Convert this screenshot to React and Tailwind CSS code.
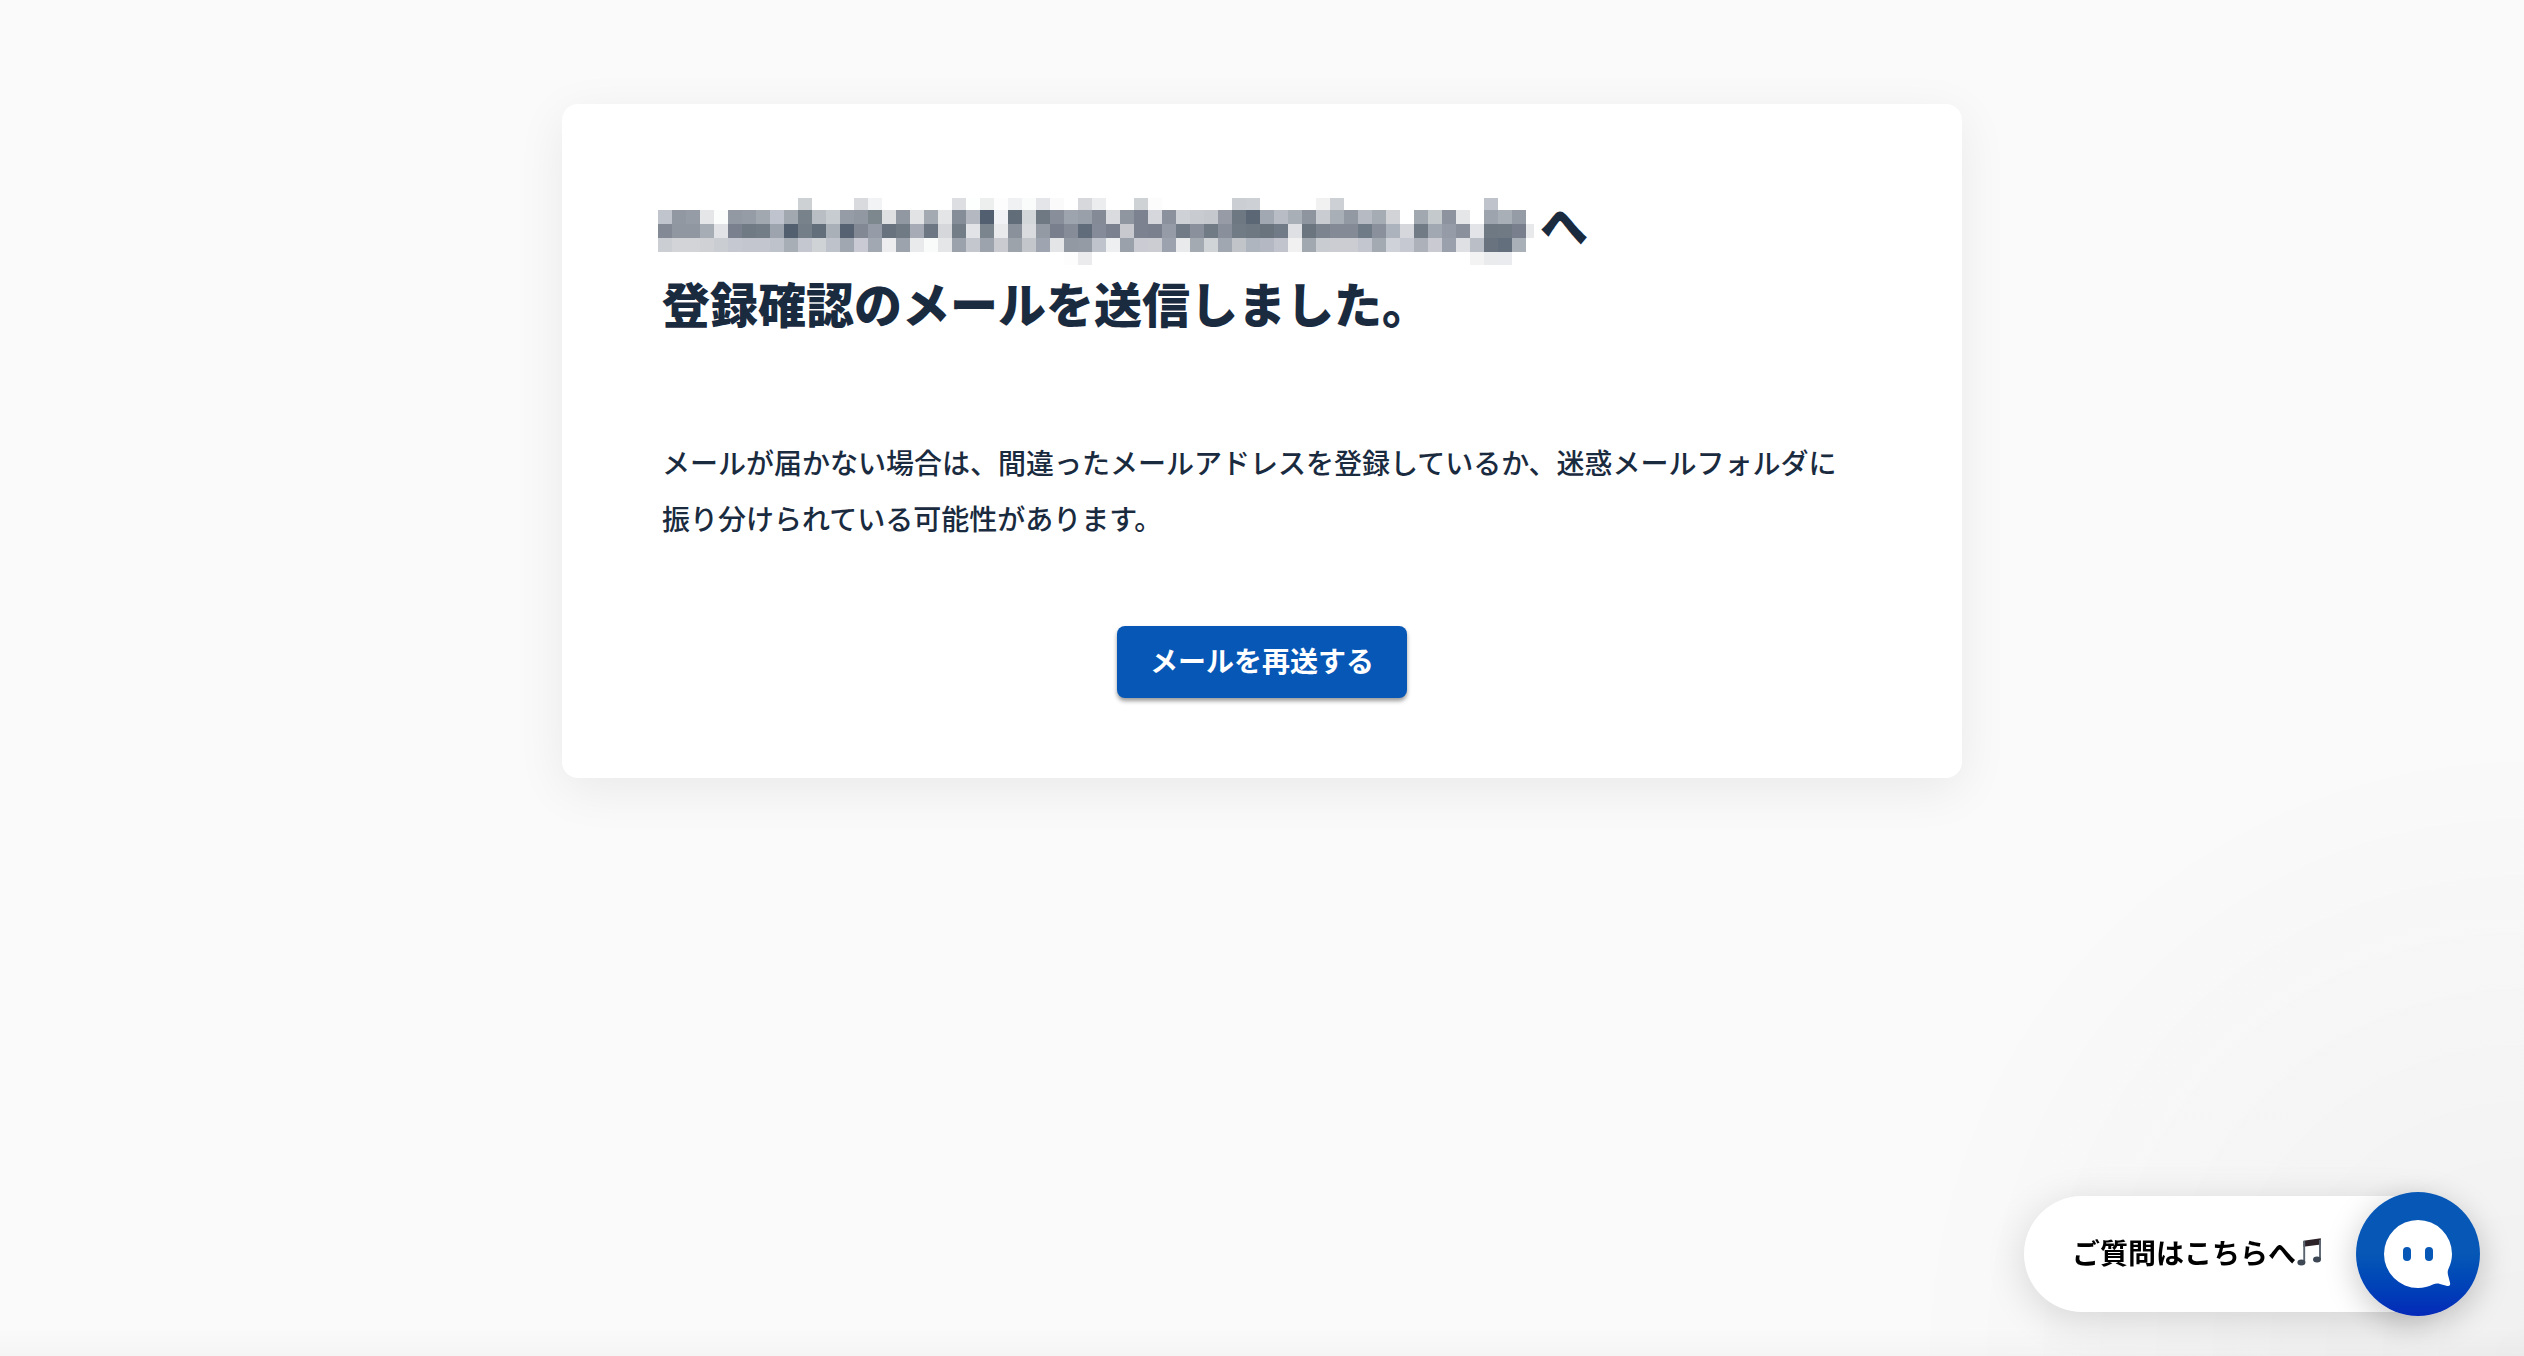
import { useState } from 'react';

const BLOCK = 14;

// Mosaic that hides the mail address, one row of colours per line ('' is empty)
const mosaicRows = [
  {
    y: 0,
    height: 12,
    colors: ',,,,,,,,,,cdd1d4,,,,d9dade,f2f3f5,,,,,,dddee2,fdffff,edefef,fdfdfd,f0f1f2,fafcfb,e4e5e9,fafafb,,d7d8dc,ecedee,,,ced2d5,fcfcfc,,,,,,cbced2,cdd0d5,,,,,f1f1f2,cdd1d5,,,,,,,,,,,bfc4cc',
  },
  {
    y: 12,
    height: 14,
    colors: 'c0c4cd,9198a1,969ca6,e5e6e7,fbfdfc,9299a2,969ca5,a2a8af,bfc3cd,a2a8af,77828a,b9bec5,c7ccd0,969ca6,9298a1,7d878e,dfe0e1,9198a1,e2e3e5,a3aab1,e4e5e7,858d98,b4b8c1,525f70,f1f2f5,616d79,d3d7da,6e7983,898f9a,9ea4ae,9aa0a9,858b96,dadbdf,9096a0,7c8290,d6d7dc,8c929d,ced1d5,c8cbd0,c5c9cd,969ba5,6e7882,5b6775,a2a8b1,b8bdc5,a9afb6,8f959f,c9ccd1,a9afb7,9299a3,b5bac3,a6acb4,d1d3d7,,a2a8b0,c4c9cc,8e949f,e5e6e8,,9da4ae,a8afb7,969ca6',
  },
  {
    y: 26,
    height: 14,
    colors: '838a96,9197a1,9197a1,a6adb4,e1e2e6,7a808e,6f7a85,727d87,9da4ad,525f6f,737e88,626e7a,a9b0b8,566272,828894,959ba7,67727e,6f7a85,a6abb5,6c7783,d6d7db,727d88,e2e3e6,7a858d,e9eaec,8a919b,dadbdf,949aa4,7a7f8e,868d98,606c7a,858b98,7c8190,c7c9cf,7c828f,7b808f,969ca7,707b87,8a909c,707b86,8a909b,707b86,6e7883,69747f,717b87,dfe0e3,6a7580,7c858f,848a96,848a96,707b88,8a919c,adb3bc,d6d7dc,707b86,a2a8b1,969ca7,8a909c,e3e4e7,6e7984,707a85,7a7f8d,e8e9eb',
  },
  {
    y: 40,
    height: 14,
    colors: 'cbced2,d3d4d8,d3d4d8,cfd1d5,cacdd1,c6c8d1,c4c6cf,c4c6cf,bec3cb,a8aeb6,c5c7d0,d0d3d6,bdc2cb,a1a7b1,c9cad4,a1a8b1,ededef,9da3ad,e9eaec,f9fafa,e5e6e8,9ba2ab,c4c7cd,9da3ac,cacbd1,9da3ab,c3c7cb,9fa5b0,e4e5e7,9299a3,959ba5,bfc3cc,eeeff1,9aa1ab,cbccd3,cbcdd2,9da3ae,e9eaec,a3aab2,d1d4d7,a1a7b1,c1c5c9,aeb5be,b4b8c2,c1c4cd,f1f1f1,a1a8af,c9ccd1,cbcdd2,cbcdd2,c3c5cf,a3aab2,d0d2d9,c6c8d2,adb1b9,cacbd2,9aa1ad,dfe0e3,b9bec7,69737f,636f7c,aab0b8',
  },
  {
    y: 54,
    height: 13,
    colors: ',,,,,,,,,,,,,,,,,,,,,,,,,,,,,fdfdfd,ebebed,,,,,,,,,,,,,,,,,,,,,,,,,,,,f3f3f3,eaebed,eaebee',
  },
];

function MaskedAddress() {
  return (
    <svg width="876" height="67" viewBox="0 0 876 67" shapeRendering="crispEdges" className="-ml-1 mr-1.5 -mb-0.5 self-end shrink-0" aria-hidden="true">
      {mosaicRows.map(row =>
        row.colors.split(',').map((color, i) =>
          color ? (
            <rect key={`${row.y}-${i}`} x={i * BLOCK} y={row.y} width={BLOCK} height={row.height} fill={`#${color}`} />
          ) : null
        )
      )}
    </svg>
  );
}

function MusicNote() {
  return (
    <svg width="28" height="30" viewBox="0 0 28 30" className="shrink-0" aria-hidden="true">
      <path d="M7.400 3.800 24.800 1.200v6.200L7.400 9.800z" fill="#2b2328" />
      <path d="M8.200 4v21M24 3v19" stroke="#5b6570" strokeWidth="1.900" />
      <ellipse cx="5.400" cy="25.400" rx="4" ry="3" fill="#3d4854" />
      <ellipse cx="21" cy="22.600" rx="4" ry="3" fill="#3d4854" />
    </svg>
  );
}

function ChatFace() {
  return (
    <svg width="70" height="70" viewBox="0 0 70 70" aria-hidden="true">
      <path
        d="M35 1a34 34 0 0 1 34 34c0 5.600-1.400 10.400-3.400 14.600-1.200 2.600-1.100 4.600-.4 7.200l1.900 7.200c.5 2.100-.8 3.400-2.900 2.900l-7.200-1.900c-2.600-.7-4.600-.5-7.200.6C45.400 67.600 40.600 69 35 69a34 34 0 0 1 0-68z"
        fill="#fff"
      />
      <rect x="20" y="28" width="8" height="14" rx="4" fill="#0757b6" />
      <rect x="42" y="28" width="8" height="14" rx="4" fill="#0757b6" />
    </svg>
  );
}

function ChatLauncher() {
  return (
    <>
      <div className="fixed right-0 bottom-0 w-[1000px] h-[1000px] pointer-events-none bg-[radial-gradient(ellipse_at_bottom_right,rgba(29,29,29,0.045)_0%,rgba(29,29,29,0)_44%)]" />
      <button type="button" className="fixed right-11 bottom-10 flex items-center cursor-pointer">
        <span className="flex items-center h-[116px] pl-12 pr-[94px] pb-1 -mr-[62px] rounded-l-full bg-white text-black text-[28px] font-bold shadow-[0_8px_40px_rgba(0,0,0,0.14)]">
          ご質問はこちらへ
          <MusicNote />
        </span>
        <span className="relative flex items-center justify-center w-[124px] h-[124px] rounded-full bg-linear-to-b from-[#0757b6] from-50% to-[#0628b8] shadow-[0_8px_32px_rgba(0,0,0,0.22)]">
          <ChatFace />
        </span>
      </button>
    </>
  );
}

export default function App() {
  const [sending, setSending] = useState(false);

  const handleResend = () => {
    setSending(true);
    setTimeout(() => setSending(false), 1000);
  };

  return (
    <div className="min-h-screen bg-[#fafafa] px-6 pt-26 text-[#1a2b40] font-['Noto_Sans_CJK_JP',sans-serif]">
      <main className="w-full max-w-[1400px] mx-auto px-25 pt-20 pb-20 rounded-2xl bg-white shadow-[0_12px_50px_rgba(0,0,0,0.07)]">
        <h1 className="text-5xl leading-[79px] font-black">
          <span className="flex items-center">
            <MaskedAddress />
            へ
          </span>
          登録確認のメールを送信しました。
        </h1>

        <p className="mt-23 text-[28px] leading-14 font-medium">
          メールが届かない場合は、間違ったメールアドレスを登録しているか、迷惑メールフォルダに振り分けられている可能性があります。
        </p>

        <div className="mt-20 flex justify-center">
          <button
            type="button"
            onClick={handleResend}
            disabled={sending}
            className="h-18 px-[33px] pb-1 rounded-lg bg-[#0757b6] text-white text-[28px] font-bold cursor-pointer shadow-[0_3px_4px_rgba(0,0,0,0.4)]"
          >
            メールを再送する
          </button>
        </div>
      </main>

      {/* Soft fade along the bottom edge of the window */}
      <div className="fixed inset-x-0 bottom-0 h-7 pointer-events-none bg-linear-to-t from-black/2 to-transparent" />
      <ChatLauncher />
    </div>
  );
}
